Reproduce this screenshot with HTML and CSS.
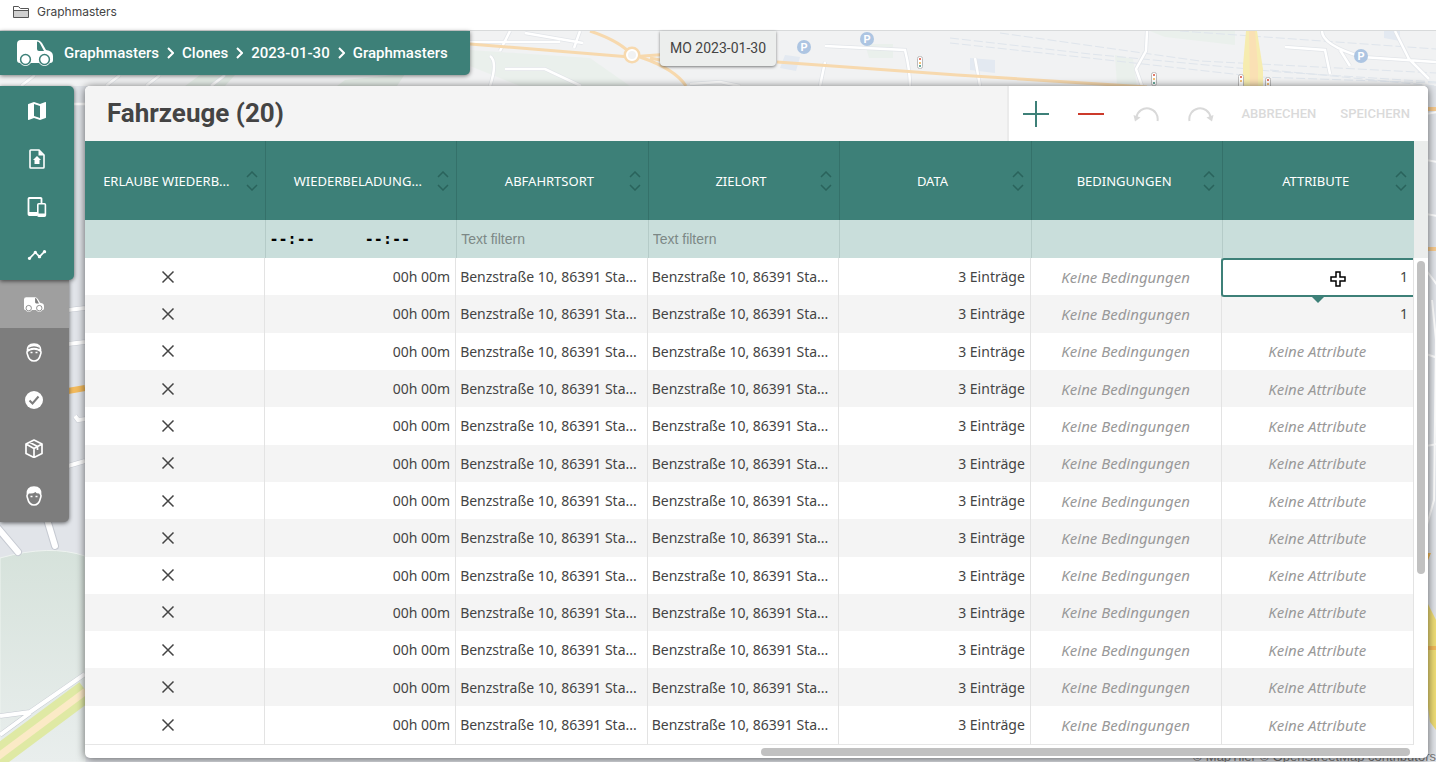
FILE: index.html
```html
<!DOCTYPE html>
<html lang="de">
<head>
<meta charset="UTF-8">
<meta name="viewport" content="width=device-width, initial-scale=1.0">
<title>Fahrzeuge</title>
<link rel="stylesheet" href="styles.css">
</head>
<body>
    <!-- Shared icons -->
    <svg class="icon-defs" aria-hidden="true">
        <symbol id="truck" viewBox="0 0 36 26">
            <path fill="#fff" d="M4 0H20q3 0 5 3l4 7q7 1 7 6v4q0 3-3 3H3q-3 0-3-3V4q0-4 4-4z"/>
            <path fill="currentColor" d="M20 1.500q2 0 3 2l4 7.500h-5q-2 0-2-2z"/>
            <g fill="#fff">
                <circle cx="8.500" cy="19.500" r="6.500"/>
                <circle cx="27.500" cy="19.500" r="6.500"/>
            </g>
            <g fill="#fff" stroke="currentColor" stroke-width="1.500">
                <circle cx="8.500" cy="19.500" r="4.900"/>
                <circle cx="27.500" cy="19.500" r="4.900"/>
            </g>
        </symbol>
        <symbol id="cross" viewBox="0 0 14 14">
            <path d="M1.500 1.500l11 11M12.500 1.500l-11 11" fill="none" stroke="#444" stroke-width="1.500"/>
        </symbol>
        <symbol id="sort" viewBox="0 0 12 20">
            <path d="M1 6l5-5 5 5M1 14l5 5 5-5" fill="none" stroke="#2a635c" stroke-width="1.500"/>
        </symbol>
    </svg>

    <div class="bookmarks">
        <svg width="18" height="14" viewBox="0 0 18 14"><path d="M1.500 12.500v-11h5l2 2h8v9z" fill="#d0d0d0" stroke="#555"/><path d="M2 2h4l2 2h8v1H2z" fill="#fff"/><path d="M1.500 5.500h15" stroke="#555"/></svg>
        <a href="#">Graphmasters</a>
    </div>

    <div class="app">
        <svg class="map" viewBox="0 31 1436 731" preserveAspectRatio="xMidYMid slice" aria-hidden="true">
            <defs>
                <linearGradient id="forest" x1="0" y1="0" x2="0" y2="1">
                    <stop offset="0" stop-color="#d6e2db"/>
                    <stop offset="1" stop-color="#e9eeed"/>
                </linearGradient>
            </defs>
            <rect y="31" width="1436" height="731" fill="#f1f2f3"/>
            <rect y="86" width="1436" height="676" fill="#e1e4e9"/>
            <!-- parks -->
            <path d="M470 50l120 8 40 28H520l-50-20z" fill="#eaf0ec"/>
            <path d="M200 75h35l-10 11h-40zM345 80l60-6-8 12h-60z" fill="#e4ece6"/>
            <path d="M1150 31h85v14l-70-8zM865 44h28v14h-24zM1115 55l18 4 4 27h-20z" fill="#eaf0ec"/>
            <path d="M0 558q50-14 85-2v206H0z" fill="url(#forest)" stroke="#eef3f0"/>
            <!-- rails and blocks -->
            <g fill="none" stroke="#dfe5ec" stroke-dasharray="9 3">
                <path d="M950 38l140 16 190 18 156 10M1000 33l200 28 236 12M950 43l130 14 180 20 176 6M1180 31l256 18M1270 70l166 16"/>
            </g>
            <path d="M970 58l25 2v13l-25-3zM785 55l15 2-4 14-16-3zM1384 31h16v10l-16-3z" fill="#e3e9f1"/>
            <g fill="none" stroke="#e2e5e9" stroke-width="4">
                <path d="M470 42h90M510 31l-10 20M580 31l-6 17M525 33l58 10M490 56q8 6 0 30M505 69h40l36 17M825 46l80 4q5 20 5 36M825 62l-5 24M690 84l30-2 20 4M1147 31l-1 20-10 18 6 17M1322 31q0 14 40 26l74 5M1395 31l14 28 20 20M1285 47l40 3 5 24M1340 50l10 16M975 58l5 28M0 104h85M225 75l-14 11M160 75l-14 11M120 75l-14 11M35 75l-14 11"/>
            </g>
            <g fill="none" stroke="#fff" stroke-width="2.500">
                <path d="M470 42h90M510 31l-10 20M580 31l-6 17M525 33l58 10M490 56q8 6 0 30M505 69h40l36 17M825 46l80 4q5 20 5 36M825 62l-5 24M690 84l30-2 20 4M1147 31l-1 20-10 18 6 17M1322 31q0 14 40 26l74 5M1395 31l14 28 20 20M1285 47l40 3 5 24M1340 50l10 16M975 58l5 28M0 104h85M225 75l-14 11M160 75l-14 11M120 75l-14 11M35 75l-14 11"/>
            </g>
            <!-- main roads -->
            <g fill="none" stroke="#f7d9ae" stroke-width="3">
                <path d="M470 44l160 13 40-3M590 31q30 10 42 24M640 57q35 12 46 29M650 58l20 4M777 62l180 13 190 12"/>
                <circle cx="632" cy="55" r="7"/>
            </g>
            <circle cx="632" cy="55" r="5" fill="#f1f2f3" stroke="#fff" stroke-width="2"/>
            <path d="M1246 31h11l6 38v17h-20V65z" fill="#f6ecb0"/>
            <path d="M1249 31h6l3 36v19h-8z" fill="#fae0b4"/>
            <!-- streets on the left edge -->
            <g fill="none" stroke="#c6cad2" stroke-width="5">
                <path d="M68 310l17-2M68 344l17-2M68 466l17-5M75 416l3 4 8-1M0 716l30-4 55-38M0 735l30-22"/>
            </g>
            <g fill="none" stroke="#fff" stroke-width="4">
                <path d="M68 310l17-2M68 344l17-2M68 466l17-5M75 416l3 4 8-1M0 716l30-4 55-38M0 735l30-22"/>
            </g>
            <g fill="none" stroke-linecap="round">
                <path d="M46 516l9 30M-4 526l22 26" stroke="#c6cad2" stroke-width="8"/>
                <path d="M46 516l9 30M-4 526l22 26" stroke="#fff" stroke-width="6"/>
            </g>
            <path d="M68 391l17-3" stroke="#f2ba5d" stroke-width="6"/>
            <path d="M-4 758l90-67" stroke="#dfe9a4" stroke-width="22"/>
            <path d="M-4 758l90-67" stroke="#fbeac6" stroke-width="7"/>
            <!-- streets on the right edge -->
            <g fill="none" stroke="#fff" stroke-width="2">
                <path d="M1426 114l12-2M1426 160l12 2M1426 214l12 2M1426 270l12 16M1426 354l12 4M1426 446l12-2M1432 300l4 40-2 160-8 28"/>
            </g>
            <path d="M1426 109h10M1426 249h10" stroke="#f6c98d" stroke-width="4"/>
            <path d="M1426 600l10 20v110l-6-8-4-30z" fill="#eedc75"/>
            <path d="M1426 553h5l-5 12zM1426 646h10v4h-10z" fill="#f1b95a"/>
            <!-- parking -->
            <g fill="#adc5e2">
                <circle cx="804" cy="47" r="7"/>
                <circle cx="867" cy="39" r="7"/>
                <circle cx="1361" cy="56" r="7"/>
            </g>
            <g class="parking">
                <text x="804" y="51">P</text>
                <text x="867" y="43">P</text>
                <text x="1361" y="60">P</text>
            </g>
            <!-- traffic lights -->
            <g fill="#fff" stroke="#bbb">
                <rect x="917.500" y="56.500" width="5" height="12" rx="2"/>
                <rect x="1151.500" y="72.500" width="5" height="13" rx="2"/>
                <rect x="1238.500" y="74.500" width="5" height="13" rx="2"/>
                <rect x="1265.500" y="77.500" width="5" height="13" rx="2"/>
            </g>
            <path d="M919 58h2v2h-2zM1153 74h2v2h-2zM1240 76h2v2h-2zM1267 79h2v2h-2z" fill="#e07a6a"/>
            <path d="M919 62h2v2h-2zM1153 78h2v2h-2zM1240 80h2v2h-2zM1267 83h2v2h-2z" fill="#f3c27a"/>
            <path d="M919 65h2v2h-2zM1153 82h2v2h-2z" fill="#6aa99a"/>
        </svg>
        <small class="attribution">© MapTiler © OpenStreetMap contributors</small>

        <header class="topbar">
            <nav class="breadcrumb">
                <svg class="logo" width="36" height="26"><use href="#truck"/></svg>
                <a href="#">Graphmasters</a>
                <svg width="7" height="12" viewBox="0 0 7 12"><path d="M1 1l5 5-5 5"/></svg>
                <a href="#">Clones</a>
                <svg width="7" height="12" viewBox="0 0 7 12"><path d="M1 1l5 5-5 5"/></svg>
                <a href="#">2023-01-30</a>
                <svg width="7" height="12" viewBox="0 0 7 12"><path d="M1 1l5 5-5 5"/></svg>
                <a href="#">Graphmasters</a>
            </nav>
            <div class="date">MO 2023-01-30</div>
        </header>

        <div class="content">
            <nav class="sidebar">
                <div class="menu menu-main">
                    <a href="#" aria-label="Karte"><svg width="24" height="24" viewBox="0 0 24 24"><path fill="#fff" d="M20.500 3l-.16.03L15 5.100 9 3 3.360 4.900c-.21.07-.36.25-.36.48V20.500c0 .28.22.5.5.5l.16-.03L9 18.900l6 2.100 5.640-1.900c.21-.07.36-.25.36-.48V3.500c0-.28-.22-.5-.5-.5zM15 19l-6-2.110V5l6 2.110V19z"/></svg></a>
                    <a href="#" aria-label="Depot"><svg width="16" height="20" viewBox="0 0 16 20"><path d="M1.800 1H10l5 5v12.200q0 .8-.8.8H1.800q-.8 0-.8-.8V1.800Q1 1 1.800 1z" fill="none" stroke="#fff" stroke-width="1.600"/><path d="M9.500 1v5.500H15z" fill="#fff"/><path d="M8 7l4 4h-1.500v4h-5v-4H4z" fill="#fff"/></svg></a>
                    <a href="#" aria-label="Geräte"><svg width="20" height="20" viewBox="0 0 20 20"><path d="M14.500 6V1.800q0-.8-.8-.8H2.300q-.8 0-.8.800v15.400q0 .8.800.800H10" fill="none" stroke="#fff" stroke-width="1.800"/><path d="M2 15h8v3H2z" fill="#fff"/><rect x="10.800" y="6.800" width="7.600" height="12.400" rx="1" fill="none" stroke="#fff" stroke-width="1.600"/><path d="M11 16.500h7.500v2.500H11z" fill="#fff"/></svg></a>
                    <a href="#" aria-label="Statistik"><svg width="20" height="20" viewBox="0 0 24 24"><path fill="#fff" d="M23 8c0 1.100-.9 2-2 2-.18 0-.35-.02-.51-.07l-3.560 3.550c.05.16.07.34.07.52 0 1.100-.9 2-2 2s-2-.9-2-2c0-.18.02-.36.07-.52l-2.550-2.550c-.16.05-.34.07-.52.07s-.36-.02-.52-.07l-4.550 4.560c.05.16.07.33.07.51 0 1.100-.9 2-2 2s-2-.9-2-2 .9-2 2-2c.18 0 .35.02.51.07l4.560-4.550C8.020 9.360 8 9.180 8 9c0-1.100.9-2 2-2s2 .9 2 2c0 .18-.02.36-.07.52l2.550 2.550c.16-.05.34-.07.52-.07s.36.02.52.07l3.550-3.560C19.020 8.350 19 8.180 19 8c0-1.100.9-2 2-2s2 .9 2 2z"/></svg></a>
                </div>
                <div class="menu menu-sub">
                    <a href="#" class="active" aria-label="Fahrzeuge"><svg width="20" height="15"><use href="#truck"/></svg></a>
                    <a href="#" aria-label="Fahrer"><svg width="16" height="19" viewBox="0 0 16 19"><path d="M1.500 8C1 4 3 1 8 1s7 3 6.500 7q1 1 0 3.500Q13 18 8 18t-6.500-6.500q-1-2.500 0-3.500z" fill="none" stroke="#fff" stroke-width="1.600"/><path d="M1.500 9C1.500 4 4 1 8 1s6.500 3 6.500 8Q11 6.800 8 6.800T1.500 9z" fill="#fff"/><path d="M2.500 5.500Q8 2.500 13.500 5.500" fill="none" stroke="#7d7d7d" stroke-width="1.300"/><path d="M4.500 9.500h2M9.500 9.500h2" stroke="#fff" stroke-width="1.500"/></svg></a>
                    <a href="#" aria-label="Aufgaben"><svg width="18" height="18" viewBox="0 0 18 18"><circle cx="9" cy="9" r="9" fill="#fff"/><path d="M4.500 9.500L7.500 12.500 13.500 5.500" fill="none" stroke="#7d7d7d" stroke-width="2"/></svg></a>
                    <a href="#" aria-label="Pakete"><svg width="18" height="19" viewBox="0 0 18 19"><path d="M9 1l8 4v9.500l-8 4-8-4V5zM1 5l8 4.500L17 5M9 9.500v9M4.500 3.300l8 4.200v3.500" fill="none" stroke="#fff" stroke-width="1.700" stroke-linejoin="round"/></svg></a>
                    <a href="#" aria-label="Kunden"><svg width="16" height="20" viewBox="0 0 16 20"><path d="M1.500 8.500C1 4 3 1 8 1s7 3 6.500 7.500q1 1 0 3.500Q13 19 8 19t-6.500-7q-1-2.500 0-3.500z" fill="none" stroke="#fff" stroke-width="1.600"/><path d="M1 9C1 4 3.500 1 8 1s7 3 7 8l-2-1.500Q10 7.500 9.500 6 7 8 3 7.500z" fill="#fff"/><path d="M4.500 10.500h2M9.500 10.500h2" stroke="#fff" stroke-width="1.500"/></svg></a>
                </div>
            </nav>

            <main class="panel">
                <div class="panel-head">
                    <h1>Fahrzeuge (20)</h1>
                    <div class="toolbar">
                        <div class="tools">
                            <button type="button" aria-label="Hinzufügen"><svg width="26" height="26" viewBox="0 0 26 26"><path d="M13 0v26M0 13h26" stroke="#3d8078" stroke-width="2"/></svg></button>
                            <button type="button" aria-label="Entfernen"><svg width="26" height="26" viewBox="0 0 26 26"><path d="M0 13h26" stroke="#cc3a2b" stroke-width="2"/></svg></button>
                            <button type="button" aria-label="Rückgängig"><svg width="26" height="26" viewBox="0 0 26 26"><path d="M3.500 16a10.500 10.500 0 0 1 21 4" fill="none" stroke="#d9d9d9" stroke-width="2"/><path d="M.5 14l7 2.500L2 20.500z" fill="#d9d9d9"/></svg></button>
                            <button type="button" aria-label="Wiederholen"><svg width="26" height="26" viewBox="0 0 26 26"><path d="M22.500 16a10.500 10.500 0 0 0-21 4" fill="none" stroke="#d9d9d9" stroke-width="2"/><path d="M25.500 14l-7 2.500 5.500 4z" fill="#d9d9d9"/></svg></button>
                        </div>
                        <div class="actions">
                            <button type="button" disabled>ABBRECHEN</button>
                            <button type="button" disabled>SPEICHERN</button>
                        </div>
                    </div>
                </div>

                <div class="grid">
                    <div class="grid-view">
                        <table class="vehicles">
                            <thead>
                                <tr class="titles">
                                    <th><div>ERLAUBE WIEDERB...<svg width="12" height="20"><use href="#sort"/></svg></div></th>
                                    <th><div>WIEDERBELADUNG...<svg width="12" height="20"><use href="#sort"/></svg></div></th>
                                    <th><div>ABFAHRTSORT<svg width="12" height="20"><use href="#sort"/></svg></div></th>
                                    <th><div>ZIELORT<svg width="12" height="20"><use href="#sort"/></svg></div></th>
                                    <th><div>DATA<svg width="12" height="20"><use href="#sort"/></svg></div></th>
                                    <th><div>BEDINGUNGEN<svg width="12" height="20"><use href="#sort"/></svg></div></th>
                                    <th><div>ATTRIBUTE<svg width="12" height="20"><use href="#sort"/></svg></div></th>
                                </tr>
                                <tr class="filters">
                                    <td></td>
                                    <td>
                                        <div class="times">
                                            <input type="text" placeholder="--:--" aria-label="Von">
                                            <input type="text" placeholder="--:--" aria-label="Bis">
                                        </div>
                                    </td>
                                    <td><input type="text" placeholder="Text filtern" aria-label="Abfahrtsort"></td>
                                    <td><input type="text" placeholder="Text filtern" aria-label="Zielort"></td>
                                    <td></td>
                                    <td></td>
                                    <td></td>
                                </tr>
                            </thead>
                            <tbody id="rows"></tbody>
                        </table>
                    </div>
                    <div class="gutter"></div>
                    <div class="scroll-y"><div class="thumb"></div></div>
                    <div class="scroll-x"><div class="thumb"></div></div>
                </div>
            </main>
        </div>
    </div>

    <script>
        // Attribute count of each visible vehicle, 0 means none
        var attributes = [1, 1, 0, 0, 0, 0, 0, 0, 0, 0, 0, 0, 0];
        var address = "Benzstraße 10, 86391 Sta...";
        var pointer = '<svg class="pointer" width="16" height="16" viewBox="0 0 16 16">' +
            '<path d="M6 1h4v5h5v4h-5v5H6v-5H1V6h5z" fill="#fff" stroke="#000" stroke-width="1.500"/></svg>';

        var html = "";
        for (var i = 0; i < attributes.length; i++) {
            html += '<tr><td class="center"><svg width="14" height="14"><use href="#cross"/></svg></td>';
            html += '<td class="right">00h 00m</td>';
            html += '<td>' + address + '</td><td>' + address + '</td>';
            html += '<td class="right">3 Einträge</td>';
            html += '<td class="center empty">Keine Bedingungen</td>';
            if (attributes[i] > 0) {
                html += '<td class="right' + (i == 0 ? ' selected' : '') + '">' + attributes[i] + (i == 0 ? pointer : '') + '</td>';
            } else {
                html += '<td class="center empty">Keine Attribute</td>';
            }
            html += '</tr>';
        }
        document.getElementById("rows").innerHTML = html;
    </script>
</body>
</html>
```

FILE: styles.css
```css
* {
    box-sizing: border-box;
}

body {
    margin: 0;
    height: 100vh;
    display: flex;
    flex-direction: column;
    overflow: hidden;
    font-family: "Noto Sans", "Open Sans", sans-serif;
    font-size: 14px;
    color: #444;
}

a {
    color: inherit;
    text-decoration: none;
}

svg {
    display: block;
    flex: none;
}

button {
    padding: 0;
    border: 0;
    background: none;
}

.icon-defs {
    position: absolute;
    width: 0;
    height: 0;
}

.bookmarks {
    display: flex;
    align-items: center;
    gap: 7px;
    height: 31px;
    padding: 0 12px 7px;
    border-bottom: 1px solid #d8dadb;
    background-color: #fff;
    font-family: Inter, sans-serif;
    font-size: 12px;
}

.app {
    position: relative;
    flex: 1;
    min-height: 0;
    display: flex;
    flex-direction: column;
}

/* Map behind everything */
.map {
    position: absolute;
    width: 100%;
    height: 100%;
}

.parking {
    fill: #fff;
    font-family: Roboto, sans-serif;
    font-size: 11px;
    font-weight: bold;
    text-anchor: middle;
}

.attribution {
    position: absolute;
    right: 0;
    bottom: 0;
    font-family: "Liberation Sans", sans-serif;
    font-size: 13px;
    line-height: 10px;
    color: #777;
}

/* Top bar */
.topbar {
    position: relative;
    display: grid;
    grid-template-columns: 1fr auto 1fr;
    align-items: start;
    height: 55px;
    font-family: Roboto, sans-serif;
}

.breadcrumb {
    justify-self: start;
    display: flex;
    align-items: center;
    gap: 8px;
    height: 44px;
    padding: 0 22px 0 17px;
    border-bottom-right-radius: 5px;
    background-color: #3d8078;
    box-shadow: 0 1px 4px rgba(0, 0, 0, 0.5);
    color: #fff;
    font-size: 15px;
    font-weight: 500;
}

.breadcrumb path {
    fill: none;
    stroke: #fff;
    stroke-width: 2;
}

.breadcrumb .logo {
    margin-right: 3px;
    color: #3d8078;
}

.date {
    padding: 0 10px;
    border-radius: 0 0 4px 4px;
    background-color: #eceeed;
    box-shadow: 0 1px 3px rgba(0, 0, 0, 0.5);
    line-height: 35px;
}

/* Sidebar */
.content {
    position: relative;
    flex: 1;
    min-height: 0;
    display: flex;
    gap: 11px;
    padding: 0 8px 4px 0;
}

.sidebar {
    width: 74px;
}

.menu {
    box-shadow: 0 1px 4px rgba(0, 0, 0, 0.6);
}

.menu a {
    display: flex;
    align-items: center;
    justify-content: center;
    height: 48px;
    padding-right: 1px;
}

.menu-main {
    position: relative;
    padding: 1px 0;
    border-radius: 0 5px 5px 0;
    background-color: #3d8078;
    z-index: 1;
}

.menu-sub {
    width: 69px;
    padding-bottom: 2px;
    border-radius: 0 0 5px 0;
    background-color: #7d7d7d;
}

.menu-sub .active {
    background-color: #9f9f9f;
    color: #7d7d7d;
}

/* Panel */
.panel {
    flex: 1;
    min-width: 0;
    display: flex;
    flex-direction: column;
    border-radius: 5px;
    overflow: hidden;
    background-color: #fff;
    box-shadow: 0 1px 8px rgba(0, 0, 0, 0.6);
}

.panel-head {
    display: flex;
    justify-content: space-between;
    height: 55px;
    background-color: #f4f4f4;
    font-family: Roboto, sans-serif;
}

h1 {
    margin: 0;
    padding-left: 22px;
    font-size: 26px;
    line-height: 55px;
}

.toolbar {
    display: flex;
    align-items: center;
    gap: 28px;
    padding: 0 18px 0 14px;
    border-left: 2px solid #ebebeb;
    background-color: #fff;
}

.tools {
    display: flex;
    gap: 29px;
}

.actions {
    display: flex;
    gap: 24px;
}

.actions button {
    font-family: Roboto, sans-serif;
    font-size: 13px;
    font-weight: 500;
    color: #dadada;
}

/* Table */
.grid {
    flex: 1;
    min-height: 0;
    display: grid;
    grid-template-columns: 1fr 14px;
    grid-template-rows: 117px 1fr 13px;
}

.grid-view {
    grid-row: span 2;
    overflow: hidden;
}

/* The first column is partly scrolled out of view */
.vehicles {
    width: calc(100% + 12px);
    height: 100%;
    margin-left: -12px;
    table-layout: fixed;
    border-spacing: 0;
}

.vehicles th,
.vehicles td {
    padding: 0;
    white-space: nowrap;
}

.titles {
    height: 79px;
    background-color: #3d8078;
}

.titles th {
    border-left: 1px solid #34716a;
    font-size: 13px;
    font-weight: normal;
    color: #fff;
}

.titles div {
    display: grid;
    grid-template-columns: 1fr 12px;
    align-items: center;
    padding: 0 7px 0 13px;
}

.filters {
    height: 38px;
    background-color: #c9dedb;
}

.filters td {
    border-left: 1px solid #b5cbc8;
}

.filters input {
    display: block;
    width: 100%;
    padding: 0 4px;
    border: 0;
    background: none;
    font-family: "Liberation Sans", sans-serif;
    font-size: 14px;
}

.filters input::placeholder {
    color: #7c8886;
}

.times {
    display: flex;
}

.times input {
    font-family: "DejaVu Sans Mono", monospace;
    font-size: 15px;
    font-weight: bold;
}

.times input::placeholder {
    color: #000;
}

tbody tr:nth-child(even) {
    background-color: #f4f4f4;
}

.vehicles tbody td {
    padding: 0 5px 0 4px;
    border-right: 1px solid #e3e3e3;
}

.vehicles tbody tr:last-child td {
    border-bottom: 1px solid #e6e6e6;
}

.center {
    text-align: center;
}

.center svg {
    margin: 0 auto;
}

.right {
    text-align: right;
}

.empty {
    color: #999;
    font-size: 15px;
    font-style: italic;
}

/* Selected cell with its marker */
.selected {
    position: relative;
}

.selected::before {
    content: "";
    position: absolute;
    inset: 0 0 -2px -1px;
    border: 2px solid #3d8078;
    border-right: 0;
    border-radius: 3px 0 0 3px;
}

.selected::after {
    content: "";
    position: absolute;
    top: 100%;
    left: 50%;
    margin-left: -8px;
    border: 8px solid transparent;
    border-top-color: #3d8078;
}

.pointer {
    position: absolute;
    top: 13px;
    right: 67px;
}

/* Scrollbars */
.gutter {
    background-color: #ebedec;
}

.scroll-y {
    padding: 3px;
}

.scroll-x {
    grid-column: span 2;
    padding: 3px 18px 2px 0;
}

.thumb {
    border-radius: 4px;
    background-color: #c1c1c1;
}

.scroll-y .thumb {
    height: 65%;
}

.scroll-x .thumb {
    width: 49%;
    height: 8px;
    margin-left: auto;
}
```
